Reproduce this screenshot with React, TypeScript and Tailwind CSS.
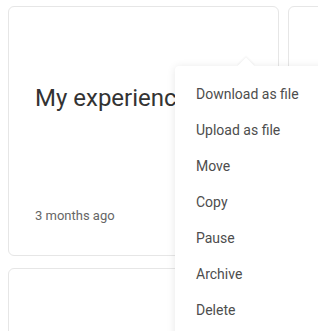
import React from "react";

const items = ["Download as file", "Upload as file", "Move", "Copy", "Pause", "Archive", "Delete"];

export default function App() {
  return (
    <div className="relative w-[318px] h-[331px] overflow-hidden bg-white" style={{ fontFamily: "Roboto, 'Liberation Sans', sans-serif" }}>
      <div className="flex flex-wrap gap-x-[9px] gap-y-[12px] pl-[8px] pt-[6px] w-[600px]">
        <div className="w-[271px] h-[250px] rounded-[6px] border border-[#e6e6e6] flex flex-col pl-[26px] pt-[75px] pb-[31px]">
          <div className="text-[24px] leading-[32px] text-[#333333] whitespace-nowrap">My experience</div>
          <div className="mt-auto text-[13px] leading-[16px] text-[#666666]">3 months ago</div>
        </div>
        <div className="w-[271px] h-[250px] rounded-[6px] border border-[#e6e6e6]" />
        <div className="w-[271px] h-[250px] rounded-[6px] border border-[#e6e6e6]" />
      </div>
      <div className="absolute left-[175px] top-[66px] w-[200px] bg-white rounded-[4px] shadow-[0_1px_8px_rgba(0,0,0,0.1)] py-[10px]">
        <div className="absolute left-[65px] top-[-6px] w-[12px] h-[12px] bg-white rotate-45 shadow-[-1px_-1px_2px_rgba(0,0,0,0.05)]" />
        <div className="relative bg-white">
          {items.map((t) => (
            <div key={t} className="h-[36px] flex items-center pl-[21px] text-[14px] text-[#4d4d4d]">
              {t}
            </div>
          ))}
        </div>
      </div>
    </div>
  );
}
